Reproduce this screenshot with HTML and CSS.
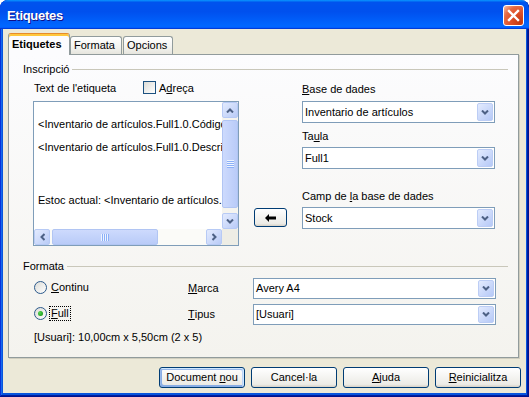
FILE: index.html
```html
<!DOCTYPE html>
<html>
  <head>
    <meta charset="UTF-8" />
    <title>Etiquetes</title>
    <link rel="stylesheet" href="styles.css">
  </head>

  <body>
    <div class="window">
      <div class="titlebar">
        <div class="title">Etiquetes</div>
        <div class="close">
          <svg width="13" height="13" viewBox="0 0 13 13"><path d="M2 2 11 11M11 2 2 11" stroke="#fff" stroke-width="2.4" stroke-linecap="square" fill="none"/></svg>
        </div>
      </div>

      <div class="client">
        <div class="tabs">
          <div class="tab tab-active tab-first">Etiquetes</div>
          <div class="tab tab-second">Formata</div>
          <div class="tab tab-third">Opcions</div>
        </div>

        <div class="panel">
          <div class="group-head">Inscripció</div>
          <div class="inscr">
            <div class="col-left">
              <div class="label-row">
                <span class="label-text">Text de l'etiqueta</span>
                <span class="checkbox"></span>
                <span>A<u>d</u>reça</span>
              </div>
              <div class="textarea">
                <div class="ta-text">
                  <div class="ta-line ta-line1">&lt;Inventario de artículos.Full1.0.Código&gt;</div>
                  <div class="ta-line ta-line2">&lt;Inventario de artículos.Full1.0.Descripción&gt;</div>
                  <div class="ta-line ta-line3">Estoc actual: &lt;Inventario de artículos.Full1.0.Stock&gt;</div>
                </div>
                <div class="vscroll">
                  <div class="sb-btn"><svg width="8" height="5" viewBox="0 0 8 5"><path d="M1 4.5 4 1.5 7 4.5" fill="none" stroke="#4D6185" stroke-width="2"/></svg></div>
                  <div class="vtrack"><div class="sb-thumb vthumb"><span class="grip-h"></span></div></div>
                  <div class="sb-btn"><svg width="8" height="5" viewBox="0 0 8 5"><path d="M1 0.5 4 3.5 7 0.5" fill="none" stroke="#4D6185" stroke-width="2"/></svg></div>
                </div>
                <div class="hscroll">
                  <div class="sb-btn"><svg width="5" height="8" viewBox="0 0 5 8"><path d="M4.5 1 1.5 4 4.5 7" fill="none" stroke="#4D6185" stroke-width="2"/></svg></div>
                  <div class="htrack"><div class="sb-thumb hthumb"><span class="grip-v"></span></div></div>
                  <div class="sb-btn"><svg width="5" height="8" viewBox="0 0 5 8"><path d="M0.5 1 3.5 4 0.5 7" fill="none" stroke="#4D6185" stroke-width="2"/></svg></div>
                </div>
                <div class="corner"></div>
              </div>
            </div>

            <div class="col-mid">
              <button class="btn btn-arrow">
                <svg width="11" height="8" viewBox="0 0 11 8"><polygon points="0,4 4,0 4,2.5 11,2.5 11,5.5 4,5.5 4,8" fill="#000"/></svg>
              </button>
            </div>

            <div class="col-right">
              <div class="field-label fl-base"><u>B</u>ase de dades</div>
              <div class="select sel-tall">
                <span>Inventario de artículos</span>
                <span class="drop"><svg width="8" height="5" viewBox="0 0 8 5"><path d="M1 0.5 4 3.5 7 0.5" fill="none" stroke="#4D6185" stroke-width="2"/></svg></span>
              </div>
              <div class="field-label fl-taula">Ta<u>u</u>la</div>
              <div class="select sel-tall sel-taula">
                <span>Full1</span>
                <span class="drop"><svg width="8" height="5" viewBox="0 0 8 5"><path d="M1 0.5 4 3.5 7 0.5" fill="none" stroke="#4D6185" stroke-width="2"/></svg></span>
              </div>
              <div class="field-label fl-camp">Camp de <u>l</u>a base de dades</div>
              <div class="select sel-tall sel-camp">
                <span>Stock</span>
                <span class="drop"><svg width="8" height="5" viewBox="0 0 8 5"><path d="M1 0.5 4 3.5 7 0.5" fill="none" stroke="#4D6185" stroke-width="2"/></svg></span>
              </div>
            </div>
          </div>

          <div class="group-head group-format">Formata</div>
          <div class="format-grid">
            <div class="radio-cell"><span class="radio"></span><span class="radio-label"><u>C</u>ontinu</span></div>
            <div class="grid-label"><u>M</u>arca</div>
            <div class="select">
              <span>Avery A4</span>
              <span class="drop"><svg width="8" height="5" viewBox="0 0 8 5"><path d="M1 0.5 4 3.5 7 0.5" fill="none" stroke="#4D6185" stroke-width="2"/></svg></span>
            </div>
            <div class="radio-cell"><span class="radio radio-on"></span><span class="radio-label focus"><u>F</u>ull</span></div>
            <div class="grid-label"><u>T</u>ipus</div>
            <div class="select">
              <span>[Usuari]</span>
              <span class="drop"><svg width="8" height="5" viewBox="0 0 8 5"><path d="M1 0.5 4 3.5 7 0.5" fill="none" stroke="#4D6185" stroke-width="2"/></svg></span>
            </div>
          </div>
          <div class="info">[Usuari]: 10,00cm x 5,50cm (2 x 5)</div>
        </div>

        <div class="buttons">
          <button class="btn btn-default">Document <u>n</u>ou</button>
          <button class="btn">Cancel·la</button>
          <button class="btn"><u>A</u>juda</button>
          <button class="btn"><u>R</u>einicialitza</button>
        </div>
      </div>
    </div>
  </body>
</html>
```

FILE: styles.css
```css
* {
  box-sizing: border-box;
}

body {
  margin: 0;
  background: #fff;
  font-family: 'Liberation Sans', Arial, sans-serif;
  font-size: 11px;
  line-height: 13px;
  color: #000;
}

u {
  text-decoration-thickness: 1px;
  text-underline-offset: 1px;
}

.window {
  width: 529px;
  height: 397px;
  display: flex;
  flex-direction: column;
  border-radius: 8px 8px 0 0;
  overflow: hidden;
  background: #0855dd;
  box-shadow: inset -1px -1px #00138c, inset 1px 0 #0831d9, inset -2px -2px #001ea0, inset 2px 0 #166aee;
}

/* title bar */
.titlebar {
  flex: none;
  height: 29px;
  display: flex;
  align-items: flex-start;
  padding: 0 5px 0 7px;
  border-radius: 8px 8px 0 0;
  background: linear-gradient(180deg, #0997ff, #0053ee 8%, #0050ee 40%, #06f 88%, #06f 93%, #005bff 95%, #003dd7 96%, #003dd7);
}

.title {
  flex: 1;
  margin-top: 8px;
  font-size: 13px;
  font-weight: bold;
  line-height: 16px;
  letter-spacing: -0.3px;
  color: #fff;
  text-shadow: 1px 1px #0f1089;
}

.close {
  width: 21px;
  height: 21px;
  margin-top: 5px;
  display: flex;
  align-items: center;
  justify-content: center;
  border: 1px solid #fff;
  border-radius: 3px;
  background: radial-gradient(circle at 85% 85%, #c23810 0, #e0512a 45%, #e66a43 70%, #f5b39b 95%, #fff 100%);
}

/* client area */
.client {
  flex: 1;
  margin: 0 3px 4px;
  padding: 4px 5px 0 5px;
  display: flex;
  flex-direction: column;
  background: #ece9d8;
}

.tabs {
  flex: none;
  position: relative;
  z-index: 1;
  height: 22px;
  margin-bottom: -1px;
  display: flex;
  align-items: flex-end;
}

.tab {
  height: 18px;
  margin-bottom: 1px;
  padding: 2px 0 0 3px;
  border: 1px solid #919b9c;
  border-bottom: 0;
  border-radius: 3px 3px 0 0;
  background: linear-gradient(#fff, #f3f3ef 60%, #e6e5de);
}

.tab-active {
  height: 22px;
  margin-bottom: 0;
  padding-top: 4px;
  border-top-color: #e68b2c;
  font-weight: bold;
  background: #fcfcfe;
  box-shadow: inset 0 2px #ffc73c;
}

.tab-first {
  width: 62px;
}

.tab-second {
  width: 52px;
}

.tab-third {
  width: 50px;
  margin-left: 1px;
}

.panel {
  flex: none;
  height: 304px;
  margin-right: 2px;
  padding: 8px 10px 0 14px;
  border: 1px solid #919b9c;
  background: linear-gradient(#fcfcfe, #f4f3ee);
  box-shadow: 1px 1px 0 #d0cebf;
}

.group-head {
  display: flex;
  align-items: center;
  gap: 3px;
}

.group-head::after {
  content: "";
  flex: 1;
  height: 1px;
  background: #c9c7ba;
}

.group-format {
  margin-top: 14px;
}

/* inscription */
.inscr {
  display: flex;
  margin: 6px 0 0 10px;
}

.col-left {
  width: 206px;
}

.label-row {
  display: flex;
  align-items: center;
  height: 13px;
  padding-left: 1px;
}

.label-text {
  width: 109px;
}

.checkbox {
  width: 13px;
  height: 13px;
  margin: -3px 3px 0 0;
  border: 1px solid #1c5180;
  background: linear-gradient(135deg, #dcdcd7, #fff);
}

.textarea {
  width: 206px;
  height: 145px;
  margin-top: 6px;
  display: grid;
  grid-template-columns: 1fr 16px;
  grid-template-rows: 1fr 16px;
  border: 1px solid #7f9db9;
  background: #fff;
}

.ta-text {
  overflow: hidden;
  padding: 16px 0 0 4px;
  white-space: nowrap;
}

.ta-line2 {
  margin-top: 10px;
}

.ta-line3 {
  margin-top: 40px;
}

.vscroll {
  display: flex;
  flex-direction: column;
  background: #f5f4ef;
}

.vtrack {
  flex: 1;
  padding-top: 2px;
}

.hscroll {
  display: flex;
  background: #fbfbf8;
}

.htrack {
  flex: 1;
  padding-left: 2px;
}

.corner {
  background: #eeede5;
}

.sb-btn {
  flex: none;
  width: 16px;
  height: 16px;
  display: flex;
  align-items: center;
  justify-content: center;
  border: 1px solid #b7caf5;
  border-radius: 2px;
  background: linear-gradient(135deg, #e3ebfe, #b9cbf7);
}

.sb-thumb {
  display: flex;
  align-items: center;
  justify-content: center;
  border: 1px solid #b1c5f3;
  border-radius: 2px;
}

.vthumb {
  height: 88px;
  background: linear-gradient(90deg, #cddafd, #b9cbf8);
}

.hthumb {
  width: 106px;
  height: 16px;
  background: linear-gradient(#cddafd, #b9cbf8);
}

.grip-h {
  width: 7px;
  height: 8px;
  background: repeating-linear-gradient(#eef4fe 0 1px, #8cb0f8 1px 2px);
}

.grip-v {
  width: 8px;
  height: 7px;
  background: repeating-linear-gradient(90deg, #eef4fe 0 1px, #8cb0f8 1px 2px);
}

.col-mid {
  width: 33px;
  margin-left: 15px;
  padding-top: 126px;
}

.col-right {
  width: 193px;
  margin-left: 15px;
}

.field-label {
  height: 13px;
}

.fl-base {
  margin-top: 1px;
}

.fl-taula {
  margin-top: 7px;
}

.fl-camp {
  margin-top: 21px;
}

.select {
  height: 21px;
  display: flex;
  align-items: center;
  padding-left: 2px;
  border: 1px solid #7f9db9;
  background: #fff;
}

.sel-tall {
  height: 22px;
  margin-top: 5px;
}

.sel-taula,
.sel-camp {
  margin-top: 4px;
}

.drop {
  width: 16px;
  height: calc(100% - 2px);
  margin: 0 1px 0 auto;
  display: flex;
  align-items: center;
  justify-content: center;
  border: 1px solid #bccdf5;
  border-radius: 2px;
  background: linear-gradient(135deg, #e3ebfe, #b6c9f7);
}

/* format */
.format-grid {
  display: grid;
  grid-template-columns: 154px 65px 243px;
  grid-template-rows: 21px 21px;
  row-gap: 5px;
  margin: 5px 0 0 11px;
}

.radio-cell,
.grid-label {
  display: flex;
  align-items: center;
}

.radio {
  width: 13px;
  height: 13px;
  margin-top: -2px;
  display: flex;
  align-items: center;
  justify-content: center;
  border: 1px solid #2c5a8c;
  border-radius: 50%;
  background: linear-gradient(135deg, #dcdcd7, #fff);
}

.radio-on::after {
  content: "";
  width: 5px;
  height: 5px;
  border-radius: 50%;
  background: radial-gradient(circle at 35% 35%, #55d655, #21a121 70%);
}

.radio-label {
  margin: -2px 0 0 4px;
}

.focus {
  padding: 0 1px;
  margin-left: 3px;
  outline: 1px dotted #000;
}

.info {
  margin: 6px 0 0 11px;
}

/* buttons */
.btn {
  width: 86px;
  height: 21px;
  padding: 0;
  border: 1px solid #003c74;
  border-radius: 3px;
  font: inherit;
  color: #000;
  background: linear-gradient(#fff, #ecebe6 86%, #d6d0c5);
}

.btn-default {
  box-shadow: inset -1px 1px #cee7ff, inset 1px 2px #98b8ea, inset -2px 2px #bcd4f6, inset 1px -1px #89ade4, inset 2px -2px #89ade4;
}

.btn-arrow {
  width: 33px;
  height: 19px;
  display: flex;
  align-items: center;
  justify-content: center;
}

.buttons {
  display: flex;
  justify-content: flex-end;
  gap: 6px;
  margin-top: 9px;
}
```
